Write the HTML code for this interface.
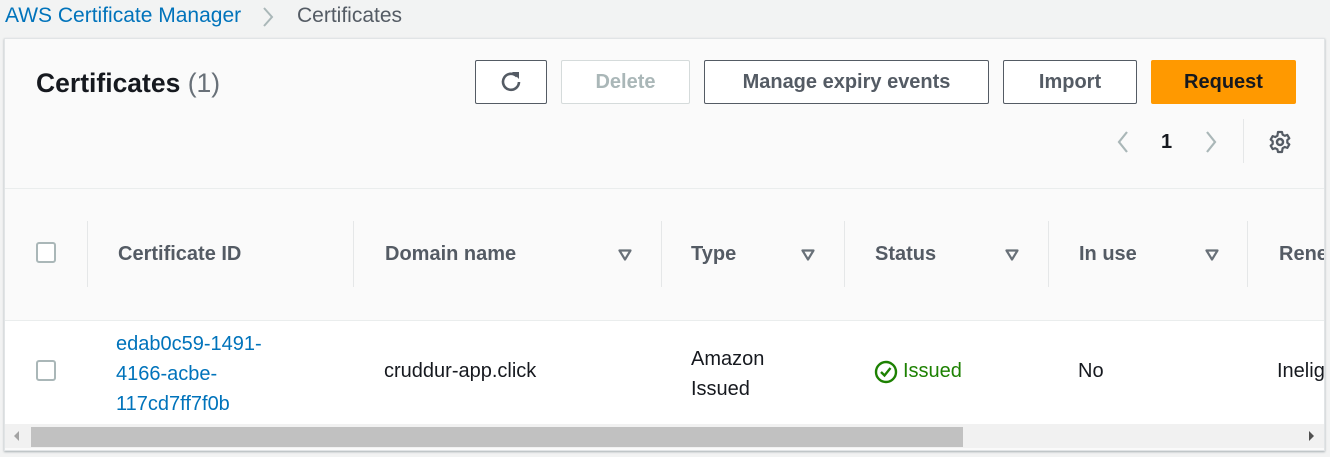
<!DOCTYPE html>
<html><head><meta charset="utf-8"><style>
*{box-sizing:border-box;margin:0;padding:0}
body{width:1330px;height:457px;background:#f2f3f3;font-family:"Liberation Sans",sans-serif;position:relative;overflow:hidden;color:#16191f}
.a{position:absolute;white-space:nowrap}
.card{position:absolute;left:4px;top:38px;width:1321px;height:413px;background:#fafafa;border:1px solid #e1e4e6;box-shadow:0 1px 2px rgba(0,28,36,.3);overflow:hidden}
.btn{position:absolute;height:44px;border:1px solid #545b64;border-radius:2px;background:#fff;font-weight:bold;font-size:20px;color:#545b64;display:flex;align-items:center;justify-content:center}
.th{position:absolute;top:0;font-weight:bold;font-size:20px;color:#545b64;line-height:130px}
.sep{position:absolute;top:32px;width:1px;height:66px;background:#e5e7e8}
.tri{position:absolute;top:60px}
.td{position:absolute;font-size:20px;color:#16191f}
.cb{position:absolute;width:20px;height:21px;border:2px solid #aab7b8;border-radius:3px;background:#fff}
</style></head><body>
<div class="a" style="left:5px;top:4px;font-size:21px;color:#0073bb">AWS Certificate Manager</div>
<svg class="a" style="left:260px;top:6px" width="16" height="22"><path d="M4 2 L12 11 L4 20" stroke="#aab7b8" stroke-width="2" fill="none"/></svg>
<div class="a" style="left:297px;top:4px;font-size:21px;color:#545b64">Certificates</div>
<div class="card">
 <div class="a" style="left:31px;top:29px;font-size:26.5px;font-weight:bold">Certificates <span style="font-weight:normal;color:#687078">(1)</span></div>
 <div class="btn" style="left:470px;top:21px;width:72px"><svg width="26" height="26" viewBox="0 0 26 26"><path d="M19 7.5 A8 8 0 1 0 21 13" stroke="#545b64" stroke-width="2.6" fill="none"/><path d="M14 3 L21 3 L21 10 Z" fill="#545b64"/></svg></div>
 <div class="btn" style="left:556px;top:21px;width:129px;border-color:#d5dbdb;color:#aab7b8">Delete</div>
 <div class="btn" style="left:699px;top:21px;width:285px">Manage expiry events</div>
 <div class="btn" style="left:998px;top:21px;width:134px">Import</div>
 <div class="btn" style="left:1146px;top:21px;width:145px;background:#ff9900;border-color:#ff9900;color:#16191f">Request</div>
 <svg class="a" style="left:1110px;top:91px" width="16" height="24"><path d="M12 2 L4 12 L12 22" stroke="#aab7b8" stroke-width="2.2" fill="none"/></svg>
 <div class="a" style="left:1156px;top:92px;font-size:20px;font-weight:bold">1</div>
 <svg class="a" style="left:1198px;top:91px" width="16" height="24"><path d="M4 2 L12 12 L4 22" stroke="#aab7b8" stroke-width="2.2" fill="none"/></svg>
 <div class="a" style="left:1238px;top:80px;width:1px;height:44px;background:#e5e7e8"></div>
 <svg class="a" style="left:1263px;top:91px" width="24" height="24" viewBox="0 0 24 24"><circle cx="12" cy="12" r="3" stroke="#545b64" stroke-width="2.5" fill="none"/><path d="M10 2h4l.6 2.6 2.2 1.2 2.5-.9 2 3.4-2 1.8v2.6l2 1.8-2 3.4-2.5-.9-2.2 1.2L14 22h-4l-.6-2.6-2.2-1.2-2.5.9-2-3.4 2-1.8v-2.6l-2-1.8 2-3.4 2.5.9 2.2-1.2z" stroke="#545b64" stroke-width="2.2" fill="none" stroke-linejoin="round"/></svg>
 <div class="a" style="left:0;top:149px;width:1321px;height:1px;background:#eaeded"></div>
 <div class="a" style="left:0;top:150px;width:1321px;height:131px">
  <div class="cb" style="left:31px;top:53px"></div>
  <div class="sep" style="left:82px"></div>
  <div class="th" style="left:113px">Certificate ID</div>
  <div class="sep" style="left:348px"></div>
  <div class="th" style="left:380px">Domain name</div>
  <svg class="tri" style="left:613px" width="14" height="12"><path d="M1.5 1.5 H12.5 L7 10.5Z" stroke="#687078" stroke-width="2.2" fill="none" stroke-linejoin="round"/></svg>
  <div class="sep" style="left:656px"></div>
  <div class="th" style="left:686px">Type</div>
  <svg class="tri" style="left:796px" width="14" height="12"><path d="M1.5 1.5 H12.5 L7 10.5Z" stroke="#687078" stroke-width="2.2" fill="none" stroke-linejoin="round"/></svg>
  <div class="sep" style="left:839px"></div>
  <div class="th" style="left:870px">Status</div>
  <svg class="tri" style="left:1000px" width="14" height="12"><path d="M1.5 1.5 H12.5 L7 10.5Z" stroke="#687078" stroke-width="2.2" fill="none" stroke-linejoin="round"/></svg>
  <div class="sep" style="left:1043px"></div>
  <div class="th" style="left:1074px">In use</div>
  <svg class="tri" style="left:1200px" width="14" height="12"><path d="M1.5 1.5 H12.5 L7 10.5Z" stroke="#687078" stroke-width="2.2" fill="none" stroke-linejoin="round"/></svg>
  <div class="sep" style="left:1242px"></div>
  <div class="th" style="left:1274px">Renewal eligibility</div>
 </div>
 <div class="a" style="left:0;top:281px;width:1321px;height:104px;background:#fff;border-top:1px solid #eaeded">
  <div class="cb" style="left:31px;top:39px"></div>
  <div class="td" style="left:111px;top:8px;color:#0073bb;line-height:30px">edab0c59-1491-<br>4166-acbe-<br>117cd7ff7f0b</div>
  <div class="td" style="left:379px;top:39px">cruddur-app.click</div>
  <div class="td" style="left:686px;top:23px;line-height:30px">Amazon<br>Issued</div>
  <svg class="a" style="left:869px;top:39px" width="24" height="24" viewBox="0 0 24 24"><circle cx="12" cy="12" r="10" stroke="#1d8102" stroke-width="2.4" fill="none"/><path d="M7 12 L10.5 15.5 L16.5 8" stroke="#1d8102" stroke-width="2.4" fill="none"/></svg>
  <div class="td" style="left:898px;top:39px;color:#1d8102">Issued</div>
  <div class="td" style="left:1073px;top:39px">No</div>
  <div class="td" style="left:1272px;top:39px">Ineligible</div>
 </div>
 <div class="a" style="left:0;top:385px;width:1321px;height:24px;background:#f1f1f1">
  <div class="a" style="left:26px;top:3px;width:932px;height:20px;background:#c1c1c1"></div>
  <svg class="a" style="left:8px;top:7px" width="8" height="10"><path d="M6 0 L1 5 L6 10Z" fill="#a3a3a3"/></svg>
  <svg class="a" style="left:1303px;top:7px" width="8" height="10"><path d="M1 0 L6 5 L1 10Z" fill="#505050"/></svg>
 </div>
</div>
</body></html>
